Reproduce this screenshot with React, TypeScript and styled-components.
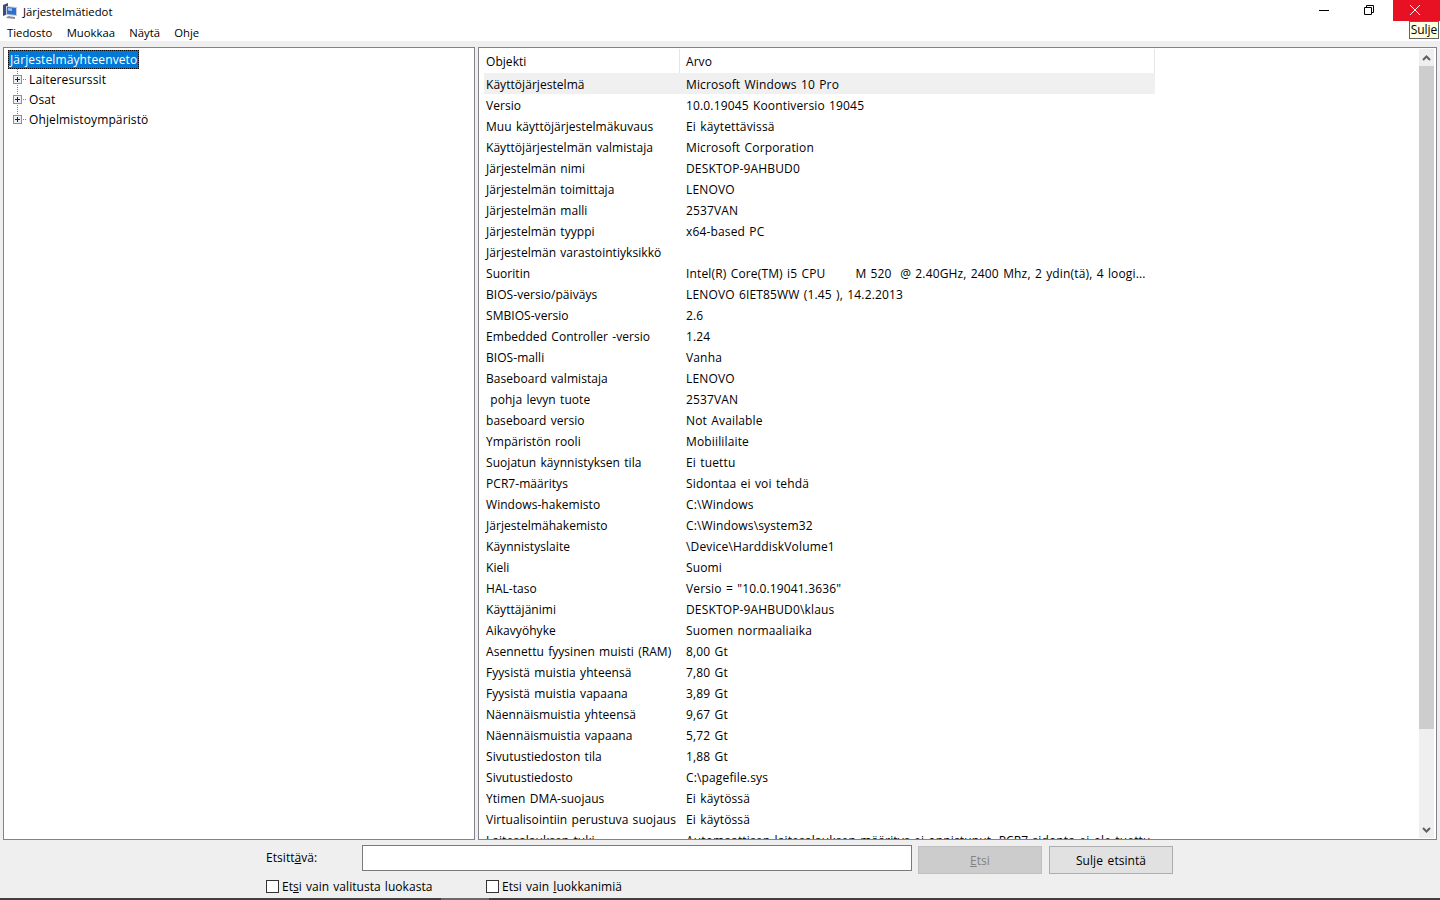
import React from 'react'
import styled, { createGlobalStyle } from 'styled-components'

const rows: [string, string][] = [
  ['Käyttöjärjestelmä', 'Microsoft Windows 10 Pro'],
  ['Versio', '10.0.19045 Koontiversio 19045'],
  ['Muu käyttöjärjestelmäkuvaus', 'Ei käytettävissä'],
  ['Käyttöjärjestelmän valmistaja', 'Microsoft Corporation'],
  ['Järjestelmän nimi', 'DESKTOP-9AHBUD0'],
  ['Järjestelmän toimittaja', 'LENOVO'],
  ['Järjestelmän malli', '2537VAN'],
  ['Järjestelmän tyyppi', 'x64-based PC'],
  ['Järjestelmän varastointiyksikkö', ''],
  ['Suoritin', 'Intel(R) Core(TM) i5 CPU       M 520  @ 2.40GHz, 2400 Mhz, 2 ydin(tä), 4 loogi...'],
  ['BIOS-versio/päiväys', 'LENOVO 6IET85WW (1.45 ), 14.2.2013'],
  ['SMBIOS-versio', '2.6'],
  ['Embedded Controller -versio', '1.24'],
  ['BIOS-malli', 'Vanha'],
  ['Baseboard valmistaja', 'LENOVO'],
  [' pohja levyn tuote', '2537VAN'],
  ['baseboard versio', 'Not Available'],
  ['Ympäristön rooli', 'Mobiililaite'],
  ['Suojatun käynnistyksen tila', 'Ei tuettu'],
  ['PCR7-määritys', 'Sidontaa ei voi tehdä'],
  ['Windows-hakemisto', 'C:\\Windows'],
  ['Järjestelmähakemisto', 'C:\\Windows\\system32'],
  ['Käynnistyslaite', '\\Device\\HarddiskVolume1'],
  ['Kieli', 'Suomi'],
  ['HAL-taso', 'Versio = "10.0.19041.3636"'],
  ['Käyttäjänimi', 'DESKTOP-9AHBUD0\\klaus'],
  ['Aikavyöhyke', 'Suomen normaaliaika'],
  ['Asennettu fyysinen muisti (RAM)', '8,00 Gt'],
  ['Fyysistä muistia yhteensä', '7,80 Gt'],
  ['Fyysistä muistia vapaana', '3,89 Gt'],
  ['Näennäismuistia yhteensä', '9,67 Gt'],
  ['Näennäismuistia vapaana', '5,72 Gt'],
  ['Sivutustiedoston tila', '1,88 Gt'],
  ['Sivutustiedosto', 'C:\\pagefile.sys'],
  ['Ytimen DMA-suojaus', 'Ei käytössä'],
  ['Virtualisointiin perustuva suojaus', 'Ei käytössä'],
  ['Laitesalauksen tuki', 'Automaattisen laitesalauksen määritys ei onnistunut, PCR7-sidonta ei ole tuettu'],
]

const GlobalStyle = createGlobalStyle`
  html, body {
    margin: 0;
    height: 100%;
    overflow: hidden;
    background: #efefef;
  }
  body {
    font-family: 'Open Sans', 'Noto Sans', sans-serif;
    font-size: 12px;
    letter-spacing: 0.05px;
    word-spacing: 1.5px;
    color: #000;
  }
`

const Window = styled.div`
  display: flex;
  flex-direction: column;
  width: 1440px;
  height: 900px;
  position: relative;
  overflow: hidden;
`

const TitleBar = styled.div`
  display: flex;
  align-items: flex-start;
  height: 22px;
  background: #fff;
`

const AppIcon = styled.svg`
  width: 16px;
  height: 17px;
  margin: 3px 4px 0 3px;
`

const TitleText = styled.div`
  font-size: 11.3px;
  letter-spacing: 0;
  word-spacing: 0;
  line-height: 24px;
`

const WindowButtons = styled.div`
  display: flex;
  margin-left: auto;
`

const WinButton = styled.div<{ close?: boolean; padRight?: number }>`
  width: ${props => (props.close ? 47 : 46)}px;
  height: 21px;
  box-sizing: border-box;
  padding: 0 ${props => props.padRight || 0}px 1px 0;
  display: flex;
  align-items: center;
  justify-content: center;
  background: ${props => (props.close ? '#e81123' : 'transparent')};
`

const MenuBar = styled.div`
  display: flex;
  height: 19px;
  padding-left: 7px;
  gap: 14.3px;
  background: #fff;
  font-size: 11.3px;
  letter-spacing: 0;
  line-height: 21px;
`

const Tooltip = styled.div`
  position: absolute;
  top: 21px;
  left: 1409px;
  width: 28px;
  height: 16px;
  border: 1px solid #646464;
  background: #ffffe1;
  letter-spacing: 0;
  line-height: 16px;
  text-align: center;
`

const Panes = styled.div`
  display: flex;
  gap: 3px;
  height: 793px;
  padding: 6px 3px 0;
`

const Pane = styled.div<{ width: number }>`
  position: relative;
  width: ${props => props.width}px;
  flex: none;
  box-sizing: border-box;
  border: 1px solid #82828a;
  background: #fff;
  overflow: hidden;
`

const Tree = styled.div`
  display: flex;
  flex-direction: column;
  padding: 2px 0 0 4px;
  letter-spacing: 0.12px;
`

const TreeRoot = styled.div`
  align-self: flex-start;
  height: 19px;
  padding: 0 2px;
  background: #0078d7;
  color: #fff;
  line-height: 20px;
  outline: 1px dotted #000;
  outline-offset: -1px;
`

const TreeRow = styled.div`
  display: flex;
  align-items: center;
  height: 20px;
`

const Expander = styled.svg`
  width: 18px;
  height: 20px;
  margin-right: 3px;
  flex: none;
`

const ListArea = styled.div`
  display: flex;
  height: 100%;
`

const Table = styled.div`
  width: 676px;
  flex: none;
`

const HeaderRow = styled.div`
  display: flex;
  height: 24px;
  margin-top: 1px;
  line-height: 25px;
`

const HeaderCell = styled.div<{ width: number; pad: number }>`
  width: ${props => props.width}px;
  flex: none;
  box-sizing: border-box;
  padding-left: ${props => props.pad}px;
  border-right: 1px solid #e5e5e5;
`

const Row = styled.div<{ selected?: boolean }>`
  display: flex;
  height: 21px;
  margin: 0 0 ${props => (props.selected ? 1 : 0)}px 5px;
  line-height: ${props => (props.selected ? 23 : 21)}px;
  background: ${props => (props.selected ? '#f0f0f0' : 'transparent')};
`

const NameCell = styled.div`
  width: 195px;
  flex: none;
  box-sizing: border-box;
  padding-left: 2px;
  word-spacing: 1.1px;
  white-space: pre;
`

const ValueCell = styled.div`
  width: 476px;
  flex: none;
  box-sizing: border-box;
  padding-left: 7px;
  letter-spacing: 0.15px;
  word-spacing: 1px;
  white-space: pre;
  overflow: hidden;
`

const Scrollbar = styled.div`
  position: absolute;
  top: 1px;
  right: 2px;
  bottom: 1px;
  width: 15px;
  display: flex;
  flex-direction: column;
  background: #efefef;
`

const ScrollArrow = styled.div`
  height: 17px;
  display: flex;
  align-items: center;
  justify-content: center;
  flex: none;
`

const ScrollThumb = styled.div`
  height: 663px;
  flex: none;
  background: #cdcdcd;
`

const ScrollTrack = styled.div`
  flex: 1;
`

const SearchBar = styled.div`
  display: grid;
  grid-template-columns: 90px 550px 124px 125px;
  grid-template-rows: 28px 20px;
  column-gap: 6px;
  row-gap: 2px;
  padding: 6px 0 0 266px;
  height: 52px;
  box-sizing: border-box;
`

const SearchLabel = styled.div`
  display: flex;
  align-items: center;
  height: 22px;
`

const SearchInput = styled.div`
  box-sizing: border-box;
  height: 26px;
  margin-top: -1px;
  border: 1px solid #7a7a7a;
  background: #fff;
`

const SearchButton = styled.div<{ disabled?: boolean }>`
  box-sizing: border-box;
  height: 28px;
  border: 1px solid ${props => (props.disabled ? '#bfbfbf' : '#adadad')};
  background: ${props => (props.disabled ? '#cccccc' : '#e1e1e1')};
  color: ${props => (props.disabled ? '#838383' : '#000')};
  text-align: center;
  line-height: 28px;
`

const CloseSearchButton = styled(SearchButton)`
  margin-left: 1px;
`

const CheckRow = styled.div`
  grid-column: 1 / -1;
  display: flex;
  gap: 54px;
`

const CheckItem = styled.div`
  display: flex;
  align-items: center;
  width: 166px;
  word-spacing: 0.9px;
  white-space: nowrap;
`

const CheckBox = styled.span`
  width: 13px;
  height: 13px;
  box-sizing: border-box;
  border: 1px solid #333;
  background: #fff;
  margin-right: 3px;
  flex: none;
`

const Key = styled.span`
  text-decoration: underline;
`

const Taskbar = styled.div`
  position: absolute;
  left: 0;
  right: 0;
  bottom: 0;
  height: 2px;
  padding-left: 441px;
  background: #404040;
`

const TaskbarItem = styled.div`
  width: 48px;
  height: 2px;
  background: #6a6a6a;
`

function TreeItem({ label, last }: { label: string; last?: boolean }) {
  return (
    <TreeRow>
      <Expander viewBox="0 0 18 20">
        <path d={last ? 'M9.5 0V10' : 'M9.5 0V20'} stroke="#808080" strokeDasharray="1 1" fill="none" />
        <path d="M13 10.5H18" stroke="#808080" strokeDasharray="1 1" fill="none" />
        <rect x="5.5" y="6.5" width="8" height="8" fill="#eef0f4" stroke="#8f8f9a" />
        <path d="M7 10.5H12M9.5 8V13" stroke="#222" fill="none" />
      </Expander>
      <span>{label}</span>
    </TreeRow>
  )
}

export default function App() {
  return (
    <Window>
      <GlobalStyle />
      <TitleBar>
        <AppIcon viewBox="0 0 16 17">
          <path d="M0 2L5 0V11L0 13Z" fill="#3a4a8c" />
          <path d="M3 3L14 4V13L3 12Z" fill="#c9ccd6" />
          <path d="M4 4L13 5V12L4 11Z" fill="#2f6fd0" />
          <path d="M5 5L9 5.5V8L5 7.5Z" fill="#9cc6f2" />
          <path d="M5 13L12 14V16L3 15Z" fill="#8b8f9c" />
        </AppIcon>
        <TitleText>Järjestelmätiedot</TitleText>
        <WindowButtons>
          <WinButton>
            <svg width="10" height="10" viewBox="0 0 10 10">
              <path d="M0 5.5H10" stroke="#000" fill="none" />
            </svg>
          </WinButton>
          <WinButton padRight={2}>
            <svg width="10" height="10" viewBox="0 0 10 10">
              <path d="M0.5 2.5H7.5V9.5H0.5ZM2.5 2.5V0.5H9.5V7.5H7.5" stroke="#000" fill="none" />
            </svg>
          </WinButton>
          <WinButton close padRight={3}>
            <svg width="10" height="10" viewBox="0 0 10 10">
              <path d="M0 0L10 10M10 0L0 10" stroke="#fff" fill="none" />
            </svg>
          </WinButton>
        </WindowButtons>
      </TitleBar>
      <MenuBar>
        <span>Tiedosto</span>
        <span>Muokkaa</span>
        <span>Näytä</span>
        <span>Ohje</span>
      </MenuBar>
      <Tooltip>Sulje</Tooltip>
      <Panes>
        <Pane width={472}>
          <Tree>
            <TreeRoot>Järjestelmäyhteenveto</TreeRoot>
            <TreeItem label="Laiteresurssit" />
            <TreeItem label="Osat" />
            <TreeItem label="Ohjelmistoympäristö" last />
          </Tree>
        </Pane>
        <Pane width={959}>
          <ListArea>
            <Table>
              <HeaderRow>
                <HeaderCell width={201} pad={7}>Objekti</HeaderCell>
                <HeaderCell width={475} pad={6}>Arvo</HeaderCell>
              </HeaderRow>
              {rows.map(([name, value], i) => (
                <Row key={name} selected={i === 0}>
                  <NameCell>{name}</NameCell>
                  <ValueCell>{value}</ValueCell>
                </Row>
              ))}
            </Table>
          </ListArea>
          <Scrollbar>
            <ScrollArrow>
              <svg width="9" height="6" viewBox="0 0 9 6">
                <path d="M1 5L4.5 1.5L8 5" stroke="#606060" strokeWidth="2" fill="none" />
              </svg>
            </ScrollArrow>
            <ScrollThumb />
            <ScrollTrack />
            <ScrollArrow>
              <svg width="9" height="6" viewBox="0 0 9 6">
                <path d="M1 1L4.5 4.5L8 1" stroke="#606060" strokeWidth="2" fill="none" />
              </svg>
            </ScrollArrow>
          </Scrollbar>
        </Pane>
      </Panes>
      <SearchBar>
        <SearchLabel>
          <span>
            Etsitt<Key>ä</Key>vä:
          </span>
        </SearchLabel>
        <SearchInput />
        <SearchButton disabled>
          <Key>E</Key>tsi
        </SearchButton>
        <CloseSearchButton>Sulje etsintä</CloseSearchButton>
        <CheckRow>
          <CheckItem>
            <CheckBox />
            <span>
              Et<Key>s</Key>i vain valitusta luokasta
            </span>
          </CheckItem>
          <CheckItem>
            <CheckBox />
            <span>
              Etsi vain <Key>l</Key>uokkanimiä
            </span>
          </CheckItem>
        </CheckRow>
      </SearchBar>
      <Taskbar>
        <TaskbarItem />
      </Taskbar>
    </Window>
  )
}
